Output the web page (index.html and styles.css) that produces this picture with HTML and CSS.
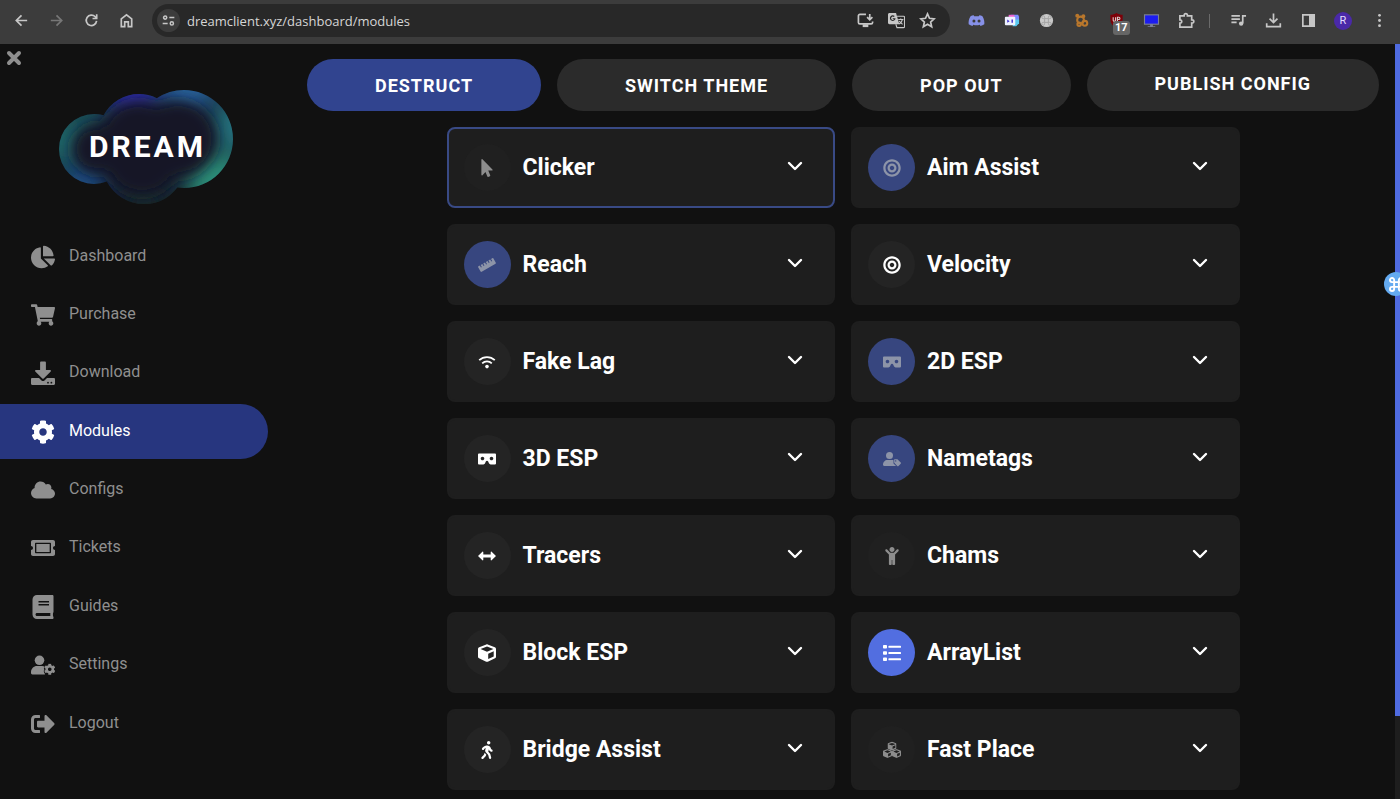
FILE: index.html
```html
<!DOCTYPE html>
<html lang="en">
<head>
    <meta charset="UTF-8">
    <meta name="viewport" content="width=device-width, initial-scale=1">
    <title>Dream - Modules</title>
    <link rel="stylesheet" href="styles.css">
</head>
<body>
    <!-- Icon sprite -->
    <svg class="sprite" aria-hidden="true">
        <symbol id="i-pie" viewBox="0 0 544 512"><path d="M527.79 288H290.5l158.03 158.03c6.04 6.04 15.98 6.53 22.19.68 38.7-36.46 65.32-85.61 73.13-140.86 1.34-9.46-6.51-17.85-16.06-17.85zm-15.83-64.8C503.72 103.74 408.26 8.28 288.8.04 279.68-.59 272 7.1 272 16.24V240h223.77c9.14 0 16.82-7.68 16.19-16.8zM224 288V50.71c0-9.55-8.39-17.4-17.84-16.06C86.99 51.49-4.1 155.6.14 280.37 4.5 408.51 114.83 513.59 243.03 511.98c50.4-.63 96.97-16.87 135.26-44.03 7.9-5.6 8.42-17.23 1.57-24.08L224 288z"/></symbol>
        <symbol id="i-cart" viewBox="0 0 576 512"><path d="M528.12 301.319l47.273-208C578.806 78.301 567.391 64 551.99 64H159.208l-9.166-44.81C147.758 8.021 137.93 0 126.529 0H24C10.745 0 0 10.745 0 24v16c0 13.255 10.745 24 24 24h69.883l70.248 343.435C147.325 417.1 136 435.222 136 456c0 30.928 25.072 56 56 56s56-25.072 56-56c0-15.674-6.447-29.835-16.824-40h209.647C430.447 426.165 424 440.326 424 456c0 30.928 25.072 56 56 56s56-25.072 56-56c0-22.172-12.888-41.332-31.579-50.405l5.517-24.276c3.413-15.018-8.002-29.319-23.403-29.319H218.117l-6.545-32h293.145c11.206 0 20.92-7.754 23.403-18.681z"/></symbol>
        <symbol id="i-download" viewBox="0 0 24 24"><path d="M10 .5h4a.9.9 0 0 1 .9.9V9h4.2c.8 0 1.2.9.6 1.500l-7 7c-.4.4-1 .4-1.400 0l-7-7C3.700 9.900 4.100 9 4.900 9h4.200V1.400a.9.9 0 0 1 .9-.9z"/><path fill-rule="evenodd" d="M1.200 17H8l2.500 2.400c.9.800 2.100.8 3 0L16 17h6.800c.7 0 1.200.5 1.200 1.200v4.600c0 .7-.5 1.200-1.200 1.200H1.200C.5 24 0 23.500 0 22.800v-4.600C0 17.500.5 17 1.200 17zM17 20.800a.9.9 0 1 0 0 1.800.9.9 0 0 0 0-1.800zm3.400 0a.9.9 0 1 0 0 1.800.9.9 0 0 0 0-1.800z"/></symbol>
        <symbol id="i-cog" viewBox="0 0 512 512"><path d="M487.4 315.7l-42.6-24.6c4.3-23.2 4.3-47 0-70.2l42.6-24.6c4.9-2.8 7.1-8.6 5.5-14-11.1-35.6-30-67.8-54.7-94.6-3.8-4.1-10-5.1-14.8-2.3L380.8 110c-17.9-15.4-38.5-27.3-60.8-35.1V25.8c0-5.6-3.9-10.5-9.4-11.7-36.7-8.2-74.3-7.800-109.2 0-5.5 1.2-9.4 6.1-9.4 11.7V75c-22.2 7.900-42.8 19.800-60.8 35.100L88.7 85.5c-4.9-2.8-11-1.9-14.8 2.3-24.7 26.7-43.6 58.900-54.7 94.6-1.7 5.4.6 11.2 5.5 14L67.3 221c-4.3 23.2-4.3 47 0 70.2l-42.6 24.6c-4.9 2.8-7.1 8.6-5.5 14 11.1 35.6 30 67.8 54.7 94.6 3.8 4.1 10 5.1 14.8 2.3l42.6-24.6c17.9 15.4 38.5 27.3 60.8 35.1v49.2c0 5.6 3.9 10.5 9.4 11.7 36.7 8.2 74.3 7.8 109.2 0 5.5-1.2 9.4-6.1 9.4-11.7v-49.2c22.2-7.9 42.8-19.8 60.8-35.1l42.6 24.6c4.9 2.8 11 1.9 14.8-2.3 24.7-26.7 43.6-58.9 54.7-94.6 1.5-5.5-.7-11.3-5.6-14.1zM256 336c-44.1 0-80-35.9-80-80s35.9-80 80-80 80 35.9 80 80-35.9 80-80 80z"/></symbol>
        <symbol id="i-cloud" viewBox="0 0 640 512"><path d="M537.6 226.6c4.1-10.7 6.4-22.4 6.4-34.6 0-53-43-96-96-96-19.7 0-38.1 6-53.3 16.2C367 64.2 315.3 32 256 32c-88.4 0-160 71.6-160 160 0 2.7.1 5.4.2 8.1C40.2 219.8 0 273.2 0 336c0 79.5 64.5 144 144 144h368c70.7 0 128-57.3 128-128 0-61.9-44-113.6-102.4-125.4z"/></symbol>
        <symbol id="i-ticket" viewBox="0 0 576 512"><path d="M128 160h320v192H128V160zm400 96c0 26.51 21.49 48 48 48v96c0 26.51-21.49 48-48 48H48c-26.51 0-48-21.49-48-48v-96c26.51 0 48-21.49 48-48s-21.49-48-48-48v-96c0-26.51 21.49-48 48-48h480c26.51 0 48 21.49 48 48v96c-26.51 0-48 21.49-48 48zm-48-104c0-13.255-10.745-24-24-24H120c-13.255 0-24 10.745-24 24v208c0 13.255 10.745 24 24 24h336c13.255 0 24-10.745 24-24V152z"/></symbol>
        <symbol id="i-book" viewBox="0 0 448 512"><path d="M448 360V24c0-13.3-10.7-24-24-24H96C43 0 0 43 0 96v320c0 53 43 96 96 96h328c13.3 0 24-10.7 24-24v-16c0-7.5-3.5-14.3-8.9-18.7-4.2-15.4-4.2-59.3 0-74.7 5.4-4.3 8.9-11.1 8.9-18.6zM128 134c0-3.3 2.7-6 6-6h212c3.3 0 6 2.7 6 6v20c0 3.3-2.7 6-6 6H134c-3.3 0-6-2.7-6-6v-20zm0 64c0-3.3 2.7-6 6-6h212c3.3 0 6 2.7 6 6v20c0 3.3-2.7 6-6 6H134c-3.3 0-6-2.7-6-6v-20zm253.4 250H96c-17.7 0-32-14.3-32-32 0-17.6 14.4-32 32-32h285.4c-1.9 17.1-1.9 46.9 0 64z"/></symbol>
        <symbol id="i-usercog" viewBox="0 0 24 24"><circle cx="8.500" cy="7.300" r="4.800"/><path d="M6 13h5.200c.9 0 1.700.2 2.400.6-.9 1-.9 2-.3 2.800-.9 1.500-.5 3 .6 4.400v.7H1.400C.6 21.500 0 20.900 0 20.100V19c0-3.300 2.700-6 6-6z"/><use href="#i-cog" x="13" y="10.500" width="11.500" height="11.500"/></symbol>
        <symbol id="i-logout" viewBox="0 0 512 512"><path d="M497 273L329 441c-15 15-41 4.5-41-17v-96H152c-13.3 0-24-10.7-24-24v-96c0-13.3 10.7-24 24-24h136V88c0-21.4 25.9-32 41-17l168 168c9.3 9.4 9.3 24.6 0 34zM192 436v-40c0-6.6-5.4-12-12-12H96c-17.7 0-32-14.3-32-32V160c0-17.7 14.3-32 32-32h84c6.6 0 12-5.4 12-12V76c0-6.6-5.4-12-12-12H96c-53 0-96 43-96 96v192c0 53 43 96 96 96h84c6.6 0 12-5.4 12-12z"/></symbol>

        <symbol id="i-pointer" viewBox="0 0 320 512"><path d="M302.189 329.126H196.105l55.831 135.993c3.889 9.428-.555 19.999-9.444 23.999l-49.165 21.427c-9.165 4-19.443-.571-23.332-9.714l-53.053-129.136-86.664 89.138C18.729 472.71 0 463.554 0 447.977V18.299C0 1.899 19.921-6.096 30.277 5.443l284.412 292.542c11.472 11.179 3.007 31.141-12.5 31.141z"/></symbol>
        <symbol id="i-target" viewBox="0 0 496 512"><path d="M248 8C111.03 8 0 119.03 0 256s111.03 248 248 248 248-111.03 248-248S384.97 8 248 8zm0 432c-101.69 0-184-82.29-184-184 0-101.69 82.29-184 184-184 101.69 0 184 82.29 184 184 0 101.69-82.29 184-184 184zm0-312c-70.69 0-128 57.31-128 128s57.31 128 128 128 128-57.31 128-128-57.31-128-128-128zm0 192c-35.29 0-64-28.71-64-64s28.71-64 64-64 64 28.71 64 64-28.71 64-64 64z"/></symbol>
        <symbol id="i-ruler" viewBox="0 0 18 18"><path transform="rotate(-30 9 9)" d="M1 5.800h1.500v2.400h1V5.800h2v2.400h1V5.800h2v2.400h1V5.800h2v2.400h1V5.800h2v2.400h1V5.800H17c.5 0 .8.3.8.8v4.800c0 .5-.3.8-.8.8H1c-.5 0-.8-.3-.8-.8V6.600c0-.5.3-.8.8-.8z"/></symbol>
        <symbol id="i-wifi" viewBox="0 0 18 18"><path class="line" d="M1.200 7.200c4.400-4.200 11.200-4.200 15.600 0M4.200 10.300c2.700-2.500 6.900-2.500 9.600 0"/><circle cx="9" cy="13.600" r="1.800"/></symbol>
        <symbol id="i-vr" viewBox="0 0 640 512"><path d="M608 64H32C14.33 64 0 78.33 0 96v320c0 17.67 14.33 32 32 32h160.22c25.19 0 48.03-14.77 58.36-37.74l27.74-61.64C286.21 331.08 302.35 320 320 320s33.79 11.08 41.68 28.62l27.74 61.64C399.75 433.23 422.6 448 447.78 448H608c17.67 0 32-14.33 32-32V96c0-17.67-14.33-32-32-32zM160 304c-35.35 0-64-28.65-64-64s28.65-64 64-64 64 28.65 64 64-28.65 64-64 64zm320 0c-35.35 0-64-28.65-64-64s28.65-64 64-64 64 28.65 64 64-28.65 64-64 64z"/></symbol>
        <symbol id="i-usertag" viewBox="0 0 18 18"><circle cx="6.500" cy="5.500" r="3.500"/><path d="M4.500 10h4.800c.6 0 1 .1 1.200.2v3.200l2.600 2.600H1.200c-.7 0-1.200-.5-1.200-1.200C0 12.100 2 10 4.500 10z"/><path fill-rule="evenodd" d="M11.500 9.200h2.900l3.300 3.200c.4.400.4.900 0 1.300l-2.200 2.200c-.4.400-.9.400-1.300 0l-3-3.100V9.500c0-.2.1-.3.300-.3zm1.200 1a.7.7 0 1 0 0 1.400.7.7 0 0 0 0-1.400z"/></symbol>
        <symbol id="i-arrows" viewBox="0 0 18 18"><path d="M0 9l4.400-4.300c.4-.3.900-.1.900.5v2.400h7.400V5.200c0-.6.5-.8.900-.5L18 9l-4.400 4.300c-.4.300-.9.100-.9-.5v-2.400H5.300v2.400c0 .6-.5.8-.9.5z"/></symbol>
        <symbol id="i-child" viewBox="0 0 384 512"><path d="M120 72c0-39.765 32.235-72 72-72s72 32.235 72 72c0 39.764-32.235 72-72 72s-72-32.236-72-72zm254.627 1.373c-12.496-12.497-32.758-12.497-45.254 0L242.745 160H141.254L54.627 73.373c-12.496-12.497-32.758-12.497-45.254 0-12.497 12.497-12.497 32.758 0 45.255L104 213.254V480c0 17.673 14.327 32 32 32h16c17.673 0 32-14.327 32-32V368h16v112c0 17.673 14.327 32 32 32h16c17.673 0 32-14.327 32-32V213.254l94.627-94.627c12.497-12.497 12.497-32.757 0-45.254z"/></symbol>
        <symbol id="i-cube" viewBox="0 0 18 18"><path fill-rule="evenodd" d="M8.300.5c.5-.2.900-.2 1.400 0l7.100 2.700c.7.300 1.200 1 1.200 1.700v7.800c0 .7-.4 1.300-1 1.600l-7.200 3.400c-.5.200-1.100.2-1.600 0L1 14.300c-.6-.3-1-.9-1-1.600V4.900c0-.7.500-1.400 1.200-1.700zM9 2.600L2.600 5v.1L9 7.800l6.400-2.700V5zM10.200 15l5.500-2.600V7.300l-5.500 2.400z"/></symbol>
        <symbol id="i-list" viewBox="0 0 18 18"><path d="M.8 1h2.400c.4 0 .8.400.8.8v1.900c0 .4-.4.8-.8.800H.8C.400 4.500 0 4.100 0 3.700V1.800C0 1.400.4 1 .8 1zm0 6.200h2.400c.4 0 .8.400.8.8v2c0 .4-.4.800-.8.800H.8c-.4 0-.8-.4-.8-.8V8c0-.4.4-.8.8-.8zm0 6.300h2.400c.4 0 .8.400.8.800v1.900c0 .4-.4.800-.8.800H.8c-.4 0-.8-.4-.8-.8v-1.900c0-.4.400-.8.800-.8zM6 1.700h11.400c.3 0 .6.300.6.600v.9c0 .3-.3.600-.6.600H6c-.3 0-.6-.3-.6-.6v-.9c0-.3.300-.6.600-.6zM6 8h11.400c.3 0 .6.300.6.600v.8c0 .3-.3.600-.6.600H6c-.3 0-.6-.3-.6-.6v-.8c0-.3.300-.6.600-.6zm0 6.200h11.400c.3 0 .6.300.6.600v.9c0 .3-.3.600-.6.600H6c-.3 0-.6-.3-.6-.6v-.9c0-.3.300-.6.600-.6z"/></symbol>
        <symbol id="i-walk" viewBox="0 0 320 512"><path d="M208 96c26.5 0 48-21.5 48-48S234.5 0 208 0s-48 21.5-48 48 21.5 48 48 48zm94.5 149.1l-23.3-11.8-9.7-29.4c-14.7-44.6-55.7-75.8-102.2-75.9-36-.1-55.9 10.1-93.3 25.2-21.6 8.7-39.3 25.2-49.7 46.2L17.6 213c-7.8 15.8-1.5 35 14.2 42.9 15.6 7.9 34.6 1.5 42.5-14.3L81 228c3.5-7 9.3-12.5 16.5-15.4l26.8-10.8-15.2 60.7c-5.2 20.8.4 42.9 14.9 58.8l59.9 65.4c7.2 7.9 12.3 17.4 14.9 27.7l18.3 73.3c4.3 17.1 21.7 27.6 38.8 23.3 17.1-4.3 27.6-21.7 23.3-38.8l-22.2-89c-2.6-10.3-7.7-19.9-14.9-27.7l-45.5-49.7 17.2-68.7 5.5 16.5c5.3 16.1 16.7 29.4 31.7 37l23.3 11.8c15.6 7.9 34.6 1.5 42.5-14.3 7.7-15.7 1.4-35.1-14.3-43zM73.6 385.8c-3.2 8.1-8 15.4-14.2 21.5l-50 50.1c-12.5 12.5-12.5 32.8 0 45.3s32.7 12.5 45.2 0l59.4-59.4c6.1-6.1 10.9-13.4 14.2-21.5l13.5-33.8c-55.3-60.3-38.7-41.8-47.4-53.7l-20.7 51.5z"/></symbol>
        <symbol id="i-cubes" viewBox="0 0 18 18"><use href="#i-cube" x="4.500" y=".6" width="9" height="9"/><use href="#i-cube" x="0" y="8" width="9" height="9"/><use href="#i-cube" x="9" y="8" width="9" height="9"/></symbol>
        <symbol id="i-chevron" viewBox="0 0 16 16"><path class="chev" d="M2 5l6 6 6-6"/></symbol>
    </svg>

    <header class="browser-bar">
        <button class="tool" aria-label="Back"><svg viewBox="0 0 18 18"><path class="line" d="M15 9H4M9 3.500L3.500 9 9 14.500"/></svg></button>
        <button class="tool faded" aria-label="Forward"><svg viewBox="0 0 18 18"><path class="line" d="M3 9h11M9 3.500L14.500 9 9 14.500"/></svg></button>
        <button class="tool" aria-label="Reload"><svg viewBox="0 0 18 18"><path class="line" d="M14.400 9.500A5.500 5.500 0 1 1 12.900 5l1.500 1.600M14.500 2.500v4.400h-4.400"/></svg></button>
        <button class="tool" aria-label="Home"><svg viewBox="0 0 18 18"><path class="line" d="M3.500 15.500V7.300L9 3l5.500 4.300v8.200h-3.600v-5H7.100v5z"/></svg></button>

        <div class="address">
            <button class="site-info" aria-label="Site information"><svg viewBox="0 0 18 18"><g class="line"><circle cx="5" cy="5.500" r="1.900"/><path d="M10 5.500h6M2 12.500h6"/><circle cx="13" cy="12.500" r="1.900"/></g></svg></button>
            <input class="url" type="text" aria-label="Address" value="dreamclient.xyz/dashboard/modules">
            <button class="tool" aria-label="Install"><svg viewBox="0 0 18 18"><path class="line" d="M9.500 2.500H3c-.8 0-1.500.7-1.500 1.500v7c0 .8.7 1.500 1.500 1.500h12c.8 0 1.500-.7 1.500-1.500v-1M13.500 2v6M10.700 5.500l2.800 2.800 2.800-2.800"/><path d="M6 13h6v3H6z"/></svg></button>
            <button class="tool" aria-label="Translate"><svg viewBox="0 0 18 18"><path fill-rule="evenodd" d="M1.500 1h7l3.500 12H1.500C.7 13 0 12.300 0 11.500v-9C0 1.700.7 1 1.500 1zM8 6.500H5v1.200h1.600A1.800 1.800 0 1 1 6.200 5.200l.9-.9A3 3 0 1 0 8 6.500z"/><path class="thin" d="M9.500 4.500h7c.5 0 1 .5 1 1v10c0 .5-.5 1-1 1H9.500L8.300 13M10.800 8h5.500M13.500 7v1M15.200 8c-.4 2.300-2 4-3.700 4.800M12 9.500c.7 1.500 2 2.800 3.500 3.500"/></svg></button>
            <button class="tool" aria-label="Bookmark"><svg viewBox="0 0 18 18"><path class="line" d="M9 2l2.100 4.700 5 .5-3.800 3.400 1.100 5L9 13l-4.400 2.600 1.100-5L1.900 7.200l5-.5z"/></svg></button>
        </div>

        <button class="tool discord" aria-label="Discord"><svg viewBox="0 0 18 18"><path fill-rule="evenodd" d="M6 3.500c-1.200.2-2.300.5-3.300 1C.9 7.300.4 10.100.7 13c1.300 1 2.600 1.500 4 1.900l.9-1.500c2.200.8 4.600.8 6.800 0l.9 1.500c1.400-.4 2.700-.9 4-1.900.3-2.900-.3-5.700-2-8.500-1-.5-2.100-.8-3.300-1l-.6 1.100c-1.600-.2-3.200-.2-4.800 0zM6.300 7.900a1.600 1.600 0 1 1 0 3.200 1.600 1.600 0 0 1 0-3.200zm5.400 0a1.600 1.600 0 1 1 0 3.200 1.600 1.600 0 0 1 0-3.200z"/></svg></button>
        <button class="tool" aria-label="Streamer extension"><svg viewBox="0 0 18 18"><path fill="#7b8cff" d="M8 3h8l1 2v5H8z"/><path fill="#ef62d2" d="M6 3h6v3H6z"/><path fill="#5ac8f0" d="M13 8h4v4l-3 3h-4z"/><rect x="2" y="5" width="11" height="9" rx="1" fill="#eef2ff"/><path fill="#3c2fd0" d="M4.500 8v3.500L7 9.800zM9 8h1.500v3.500H9z"/></svg></button>
        <button class="tool" aria-label="Shortcuts extension"><svg viewBox="0 0 18 18"><circle cx="9" cy="9" r="7" fill="#c9c9c9"/><path fill="none" stroke="#a2a2a2" stroke-width="1" d="M7 7h4v4H7zM7 7H5.500A1.500 1.500 0 1 1 7 5.500zM11 7h1.500A1.500 1.500 0 1 0 11 5.500zM7 11H5.500A1.500 1.500 0 1 0 7 12.500zM11 11h1.500a1.500 1.500 0 1 1-1.500 1.500z"/></svg></button>
        <button class="tool" aria-label="Cookie extension"><svg viewBox="0 0 18 18"><g fill="none" stroke="#b9772c" stroke-width="2.200"><circle cx="8" cy="8.500" r="3.600"/><circle cx="12.500" cy="12" r="2.600"/><circle cx="6.500" cy="13" r="1.800"/><circle cx="4.500" cy="4" r="1"/><circle cx="11" cy="4.500" r="1"/></g></svg></button>
        <button class="tool" aria-label="Content blocker"><svg viewBox="0 0 18 18"><path fill="#7d0008" d="M9 1c2 1.300 4 1.900 6.500 2v5c0 4-2.500 7-6.500 9-4-2-6.500-5-6.500-9V3C5 2.900 7 2.300 9 1z"/><path fill="none" stroke="#d8c8c8" stroke-width="1.200" d="M5.500 5.500v3.300c0 1.500 2.500 1.500 2.500 0V5.500M10 10V5.500h1.500c1.500 0 1.500 2.500 0 2.500H10"/></svg><span class="badge">17</span></button>
        <button class="tool" aria-label="Screen extension"><svg viewBox="0 0 18 18"><path fill="#7a7f95" d="M1 2.500h16v11h-6.500V15h2.500v1H5v-1h2.500v-1.500H1z"/><path fill="#1c1cf0" d="M2.200 3.600h13.600v8.700H2.200z"/></svg></button>
        <button class="tool" aria-label="Extensions"><svg viewBox="0 0 18 18"><path class="line" d="M2 4h4.500c-.3-3 3.800-3 3.500 0h4.500v4.300c3-.3 3 3.700 0 3.400V16H2v-4.300c2.600.2 2.600-3.600 0-3.400z"/></svg></button>
        <span class="divider"></span>
        <button class="tool" aria-label="Media"><svg viewBox="0 0 18 18"><path class="line" d="M1.500 4h9M1.500 7.500h9M1.500 11H7M13.500 12V4H17"/><circle cx="11.800" cy="12.300" r="2.300"/></svg></button>
        <button class="tool" aria-label="Downloads"><svg viewBox="0 0 18 18"><path class="line" d="M9 1.500v9.500M4.800 7L9 11.200 13.200 7M1.800 12v3.500h14.400V12"/></svg></button>
        <button class="tool" aria-label="Side panel"><svg viewBox="0 0 18 18"><path class="line" d="M3 3h12v12H3z"/><path d="M9.500 3H15v12H9.500z"/></svg></button>
        <button class="profile" aria-label="Profile">R</button>
        <button class="tool" aria-label="Menu"><svg viewBox="0 0 18 18"><circle cx="9" cy="3.500" r="1.500"/><circle cx="9" cy="9" r="1.500"/><circle cx="9" cy="14.500" r="1.500"/></svg></button>
    </header>

    <div class="app">
        <aside class="sidebar">
            <button class="close" aria-label="Close menu"><svg viewBox="0 0 16 16"><path d="M3 3l10 10M13 3L3 13"/></svg></button>

            <svg class="logo" viewBox="0 0 175 114" role="img" aria-label="Dream">
                <defs>
                    <filter id="glow" x="-50%" y="-50%" width="200%" height="200%"><feGaussianBlur stdDeviation="11"/></filter>
                    <filter id="soft" x="-20%" y="-20%" width="140%" height="140%"><feGaussianBlur stdDeviation="7"/></filter>
                    <clipPath id="cloud"><circle cx="36" cy="59" r="35"/><circle cx="81" cy="44" r="40"/><circle cx="126" cy="49" r="49"/><circle cx="86" cy="72" r="42"/></clipPath>
                </defs>
                <g clip-path="url(#cloud)">
                    <rect width="175" height="114" fill="#15202f"/>
                    <!-- colours along the rim -->
                    <g filter="url(#glow)">
                        <circle cx="4" cy="50" r="26" fill="#1f6468"/>
                        <circle cx="32" cy="20" r="16" fill="#1c5560"/>
                        <circle cx="24" cy="96" r="22" fill="#1f4f88"/>
                        <circle cx="74" cy="0" r="26" fill="#2c2c9c"/>
                        <circle cx="130" cy="-4" r="28" fill="#26609a"/>
                        <circle cx="178" cy="36" r="26" fill="#22707c"/>
                        <circle cx="158" cy="92" r="30" fill="#2c8c78"/>
                        <circle cx="86" cy="118" r="22" fill="#132a2a"/>
                    </g>
                    <!-- dark centre -->
                    <g filter="url(#soft)" fill="#131728">
                        <circle cx="38" cy="59" r="24"/>
                        <circle cx="80" cy="48" r="36"/>
                        <circle cx="120" cy="49" r="38"/>
                        <circle cx="84" cy="68" r="37"/>
                    </g>
                </g>
                <text x="31" y="67">DREAM</text>
            </svg>

            <nav class="menu">
                <a href="#"><svg><use href="#i-pie"/></svg><span>Dashboard</span></a>
                <a href="#"><svg><use href="#i-cart"/></svg><span>Purchase</span></a>
                <a href="#"><svg><use href="#i-download"/></svg><span>Download</span></a>
                <a href="#" class="active"><svg><use href="#i-cog"/></svg><span>Modules</span></a>
                <a href="#"><svg><use href="#i-cloud"/></svg><span>Configs</span></a>
                <a href="#"><svg><use href="#i-ticket"/></svg><span>Tickets</span></a>
                <a href="#"><svg><use href="#i-book"/></svg><span>Guides</span></a>
                <a href="#"><svg><use href="#i-usercog"/></svg><span>Settings</span></a>
                <a href="#"><svg><use href="#i-logout"/></svg><span>Logout</span></a>
            </nav>
        </aside>

        <main class="content">
            <div class="actions">
                <button class="btn primary">DESTRUCT</button>
                <button class="btn">SWITCH THEME</button>
                <button class="btn">POP OUT</button>
                <button class="btn publish">PUBLISH CONFIG</button>
            </div>

            <div class="modules">
                <section class="card selected">
                    <button class="toggle locked" aria-label="Toggle Clicker"><svg><use href="#i-pointer"/></svg></button>
                    <h2>Clicker</h2>
                    <button class="expand" aria-label="Expand Clicker"><svg><use href="#i-chevron"/></svg></button>
                </section>
                <section class="card">
                    <button class="toggle on locked" aria-label="Toggle Aim Assist"><svg><use href="#i-target"/></svg></button>
                    <h2>Aim Assist</h2>
                    <button class="expand" aria-label="Expand Aim Assist"><svg><use href="#i-chevron"/></svg></button>
                </section>
                <section class="card">
                    <button class="toggle on locked" aria-label="Toggle Reach"><svg><use href="#i-ruler"/></svg></button>
                    <h2>Reach</h2>
                    <button class="expand" aria-label="Expand Reach"><svg><use href="#i-chevron"/></svg></button>
                </section>
                <section class="card">
                    <button class="toggle" aria-label="Toggle Velocity"><svg><use href="#i-target"/></svg></button>
                    <h2>Velocity</h2>
                    <button class="expand" aria-label="Expand Velocity"><svg><use href="#i-chevron"/></svg></button>
                </section>
                <section class="card">
                    <button class="toggle" aria-label="Toggle Fake Lag"><svg><use href="#i-wifi"/></svg></button>
                    <h2>Fake Lag</h2>
                    <button class="expand" aria-label="Expand Fake Lag"><svg><use href="#i-chevron"/></svg></button>
                </section>
                <section class="card">
                    <button class="toggle on locked" aria-label="Toggle 2D ESP"><svg><use href="#i-vr"/></svg></button>
                    <h2>2D ESP</h2>
                    <button class="expand" aria-label="Expand 2D ESP"><svg><use href="#i-chevron"/></svg></button>
                </section>
                <section class="card">
                    <button class="toggle" aria-label="Toggle 3D ESP"><svg><use href="#i-vr"/></svg></button>
                    <h2>3D ESP</h2>
                    <button class="expand" aria-label="Expand 3D ESP"><svg><use href="#i-chevron"/></svg></button>
                </section>
                <section class="card">
                    <button class="toggle on locked" aria-label="Toggle Nametags"><svg><use href="#i-usertag"/></svg></button>
                    <h2>Nametags</h2>
                    <button class="expand" aria-label="Expand Nametags"><svg><use href="#i-chevron"/></svg></button>
                </section>
                <section class="card">
                    <button class="toggle" aria-label="Toggle Tracers"><svg><use href="#i-arrows"/></svg></button>
                    <h2>Tracers</h2>
                    <button class="expand" aria-label="Expand Tracers"><svg><use href="#i-chevron"/></svg></button>
                </section>
                <section class="card">
                    <button class="toggle locked" aria-label="Toggle Chams"><svg><use href="#i-child"/></svg></button>
                    <h2>Chams</h2>
                    <button class="expand" aria-label="Expand Chams"><svg><use href="#i-chevron"/></svg></button>
                </section>
                <section class="card">
                    <button class="toggle" aria-label="Toggle Block ESP"><svg><use href="#i-cube"/></svg></button>
                    <h2>Block ESP</h2>
                    <button class="expand" aria-label="Expand Block ESP"><svg><use href="#i-chevron"/></svg></button>
                </section>
                <section class="card">
                    <button class="toggle on" aria-label="Toggle ArrayList"><svg><use href="#i-list"/></svg></button>
                    <h2>ArrayList</h2>
                    <button class="expand" aria-label="Expand ArrayList"><svg><use href="#i-chevron"/></svg></button>
                </section>
                <section class="card">
                    <button class="toggle" aria-label="Toggle Bridge Assist"><svg><use href="#i-walk"/></svg></button>
                    <h2>Bridge Assist</h2>
                    <button class="expand" aria-label="Expand Bridge Assist"><svg><use href="#i-chevron"/></svg></button>
                </section>
                <section class="card">
                    <button class="toggle locked" aria-label="Toggle Fast Place"><svg><use href="#i-cubes"/></svg></button>
                    <h2>Fast Place</h2>
                    <button class="expand" aria-label="Expand Fast Place"><svg><use href="#i-chevron"/></svg></button>
                </section>
            </div>
        </main>

        <div class="scrollbar"><div class="thumb"></div></div>
        <button class="shortcut" aria-label="Shortcuts"><svg viewBox="0 0 18 18"><path d="M6.500 6.500h5v5h-5zM6.500 6.500H4.300a2.200 2.200 0 1 1 2.200-2.200zM11.500 6.500h2.200a2.200 2.200 0 1 0-2.200-2.200zM6.500 11.500H4.300a2.200 2.200 0 1 0 2.200 2.200zM11.500 11.500h2.200a2.200 2.200 0 1 1-2.200 2.200z"/></svg></button>
    </div>
</body>
</html>
```

FILE: styles.css
```css
* {
    box-sizing: border-box;
}
body {
    margin: 0;
    height: 100vh;
    display: flex;
    flex-direction: column;
    overflow: hidden;
    background-color: #111111;
    color: #ffffff;
    font-family: Roboto, 'Liberation Sans', sans-serif;
}
button {
    padding: 0;
    border: none;
    background: none;
    color: inherit;
    font-family: inherit;
    cursor: pointer;
}
svg {
    display: block;
    fill: currentColor;
}
.sprite {
    position: absolute;
    width: 0;
    height: 0;
}
.line {
    fill: none;
    stroke: currentColor;
    stroke-width: 1.8;
}
.thin {
    fill: none;
    stroke: currentColor;
    stroke-width: 1.2;
}

/* Browser bar */
.browser-bar {
    flex: none;
    display: flex;
    align-items: center;
    gap: 11px;
    height: 44px;
    padding: 0 9px 3px;
    background-color: #3c3c3c;
    color: #c7c7c7;
}
.tool {
    position: relative;
    flex: none;
    display: flex;
    align-items: center;
    justify-content: center;
    width: 24px;
    height: 24px;
}
.tool svg {
    width: 17px;
    height: 17px;
}
.faded {
    color: #777777;
}
.discord {
    color: #8791e8;
}
.address {
    flex: 1;
    display: flex;
    align-items: center;
    gap: 7px;
    height: 33px;
    margin: 0 3px;
    padding: 0 11px 0 5px;
    border-radius: 17px;
    background-color: #282828;
}
.site-info {
    flex: none;
    display: flex;
    align-items: center;
    justify-content: center;
    width: 23px;
    height: 23px;
    border-radius: 50%;
    background-color: #3c3c3c;
}
.site-info svg {
    width: 15px;
    height: 15px;
}
.url {
    flex: 1;
    min-width: 0;
    padding: 0;
    border: none;
    outline: none;
    background: none;
    color: #d6d6d6;
    font: 13px 'Open Sans', 'Noto Sans', sans-serif;
}
.badge {
    position: absolute;
    left: 9px;
    top: 12px;
    padding: 0 2px;
    border-radius: 3px;
    background-color: #666666;
    color: #ffffff;
    font-size: 11px;
    font-weight: bold;
    line-height: 14px;
}
.divider {
    width: 6px;
    height: 14px;
    border-left: 1px solid #6a6a6a;
}
.profile {
    flex: none;
    width: 18px;
    height: 18px;
    margin: 0 4px 0 3px;
    border-radius: 50%;
    background-color: #4a29a8;
    color: #e4dcff;
    font-size: 11px;
}

/* Sidebar */
.app {
    position: relative;
    flex: 1;
    min-height: 0;
    display: flex;
}
.sidebar {
    flex: none;
    display: flex;
    flex-direction: column;
    width: 291px;
    padding: 6px 0 48px;
    color: #8f8f8f;
}
.close {
    width: 16px;
    height: 16px;
    margin-left: 6px;
}
.close path {
    stroke: currentColor;
    stroke-width: 4;
    stroke-linecap: round;
}
.logo {
    width: 175px;
    height: 114px;
    margin: 24px auto 25px;
}
.logo text {
    fill: #ffffff;
    font-size: 30px;
    font-weight: bold;
    letter-spacing: 3px;
}
.menu {
    flex: 1;
    display: flex;
    flex-direction: column;
    justify-content: space-between;
}
.menu a {
    display: flex;
    align-items: center;
    gap: 14px;
    width: 268px;
    height: 55px;
    padding-left: 31px;
    border-radius: 0 28px 28px 0;
    color: inherit;
    font-size: 16px;
    text-decoration: none;
}
.menu svg {
    width: 24px;
    height: 24px;
}
.menu span {
    padding-bottom: 3px;
}
.menu .active {
    background-color: #27367f;
    color: #ffffff;
}

/* Main area */
.content {
    flex: 1;
    min-width: 0;
    padding: 15px 16px;
    overflow: hidden;
}
.actions {
    display: flex;
    gap: 16px;
    margin-bottom: 16px;
}
.btn {
    flex: 1 1 auto;
    height: 52px;
    border-radius: 26px;
    background-color: #2b2b2b;
    font-size: 18px;
    font-weight: bold;
    letter-spacing: 1px;
}
.primary {
    background-color: #31448f;
}
.publish {
    padding-bottom: 4px;
}
.modules {
    display: grid;
    grid-template-columns: 1fr 1fr;
    gap: 16px;
    max-width: 793px;
    margin: 0 auto;
}
.card {
    display: flex;
    align-items: center;
    gap: 12px;
    height: 81px;
    padding: 0 30px 0 15px;
    border: 2px solid #1e1e1e;
    border-radius: 8px;
    background-color: #1e1e1e;
}
.selected {
    border-color: #394a85;
}
.card h2 {
    flex: 1;
    margin: 0;
    font-size: 23px;
    font-weight: bold;
}
.toggle {
    display: flex;
    align-items: center;
    justify-content: center;
    width: 47px;
    height: 47px;
    border-radius: 50%;
    background-color: #242424;
}
.toggle svg {
    width: 18px;
    height: 18px;
}
.on {
    background-color: #526ee0;
}
.locked {
    background-color: #202020;
    color: #8d8d8d;
}
.on.locked {
    background-color: #37467f;
    color: #8d94a8;
}
.expand {
    padding-bottom: 3px;
}
.expand svg {
    width: 16px;
    height: 16px;
}
.chev {
    fill: none;
    stroke: currentColor;
    stroke-width: 2.4;
    stroke-linecap: round;
    stroke-linejoin: round;
}

/* Page scrollbar */
.scrollbar {
    flex: none;
    width: 5px;
    background-color: #1e1e1e;
}
.thumb {
    height: 89%;
    background-color: #4f6be0;
}
.shortcut {
    position: absolute;
    right: -8px;
    top: 228px;
    display: flex;
    align-items: center;
    justify-content: center;
    width: 24px;
    height: 24px;
    border-radius: 50%;
    background-color: #64aaf0;
}
.shortcut svg {
    width: 17px;
    height: 17px;
    fill: none;
    stroke: #ffffff;
    stroke-width: 2;
}
```
